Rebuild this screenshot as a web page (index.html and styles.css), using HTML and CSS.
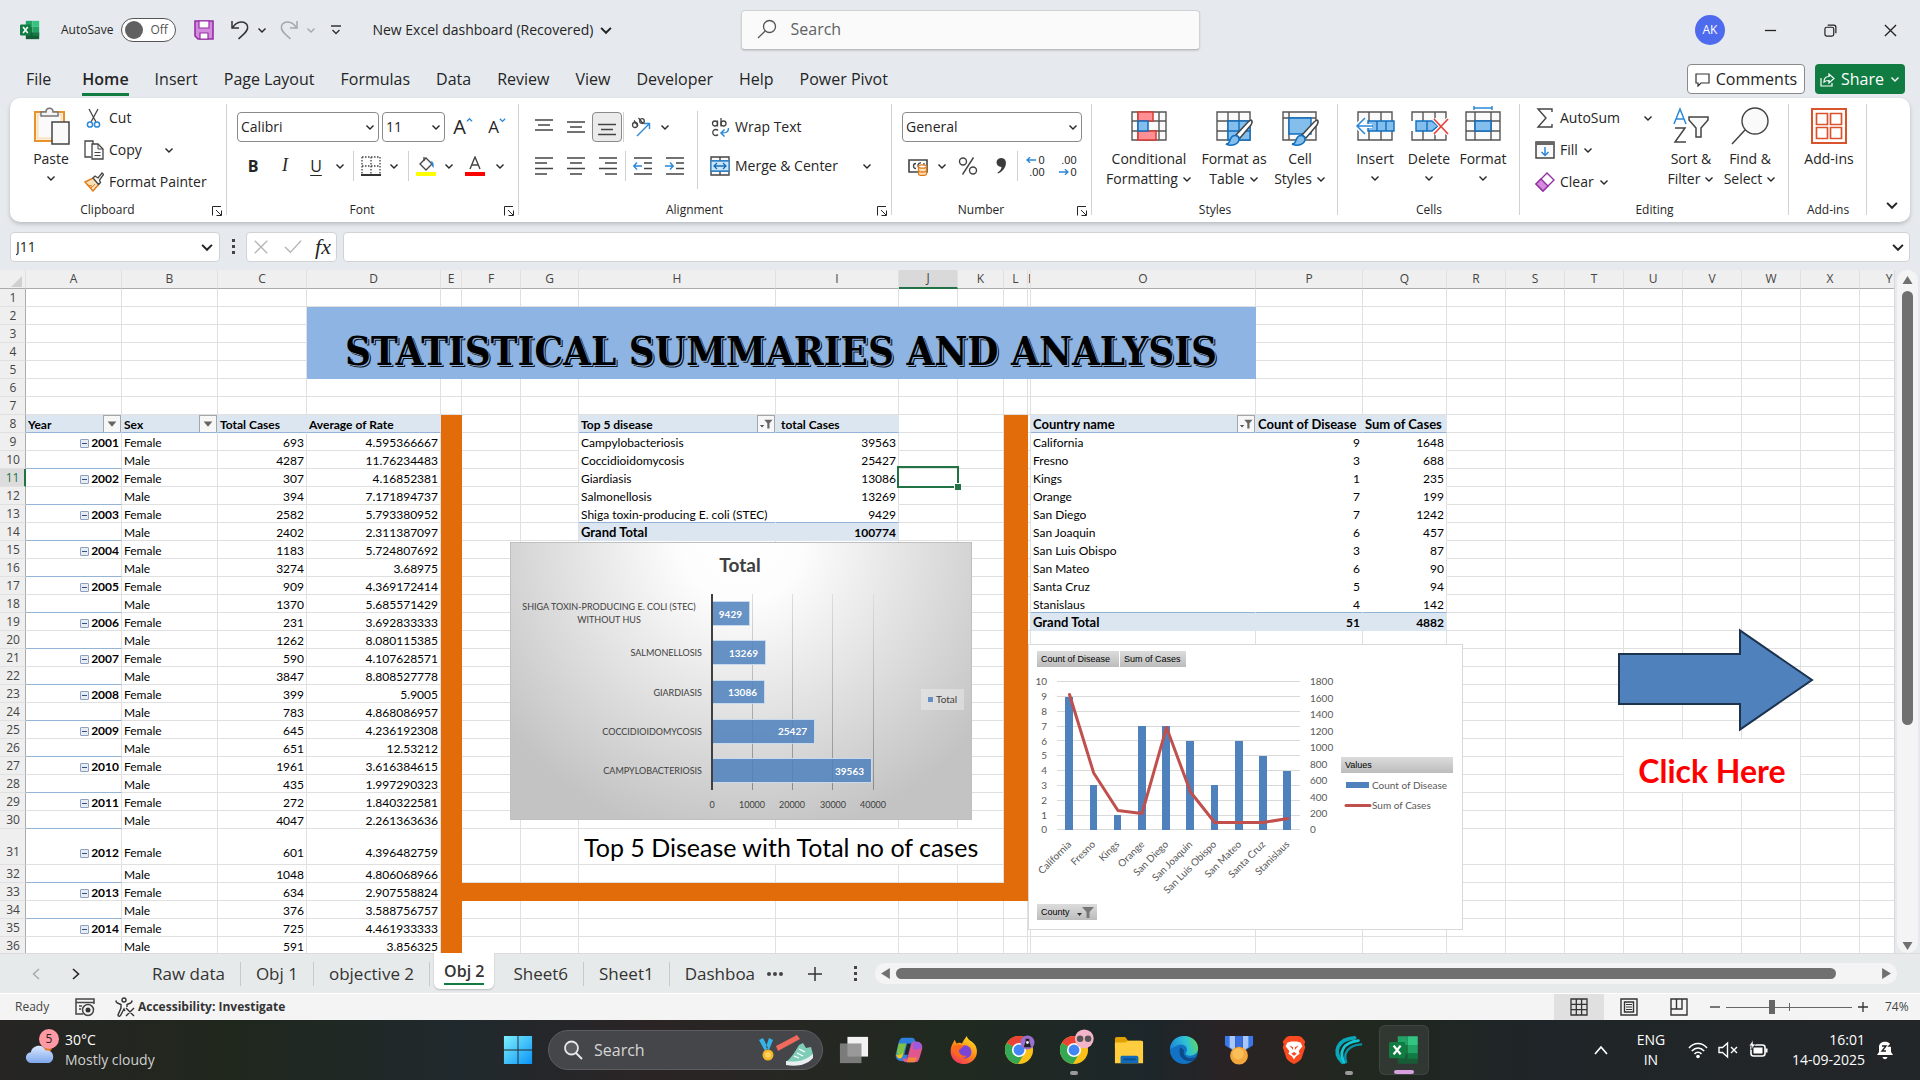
FILE: index.html
```html
<!DOCTYPE html>
<html lang="en">
<head>
<meta charset="utf-8">
<title>New Excel dashboard (Recovered) - Excel</title>
<link rel="stylesheet" href="styles.css">
</head>
<body>
<svg class="defs" aria-hidden="true">
  <symbol id="chev" viewBox="0 0 10 10"><path d="M1.5 3.5 5 7l3.5-3.5" fill="none" stroke="currentColor" stroke-width="1.4"/></symbol>
  <symbol id="launch" viewBox="0 0 10 10"><path d="M.5 9.500V.5H9M4 4l5 5M9.500 4.500v5h-5" fill="none" stroke="currentColor"/></symbol>
  <symbol id="excel" viewBox="0 0 24 24">
    <path d="M7 1h8v7H7z" fill="#21a366"/><path d="M15 1h8v7h-8z" fill="#33c481"/><path d="M7 8h8v8H7z" fill="#107c41"/><path d="M15 8h8v7h-8z" fill="#21a366"/><path d="M7 15h16v8H7z" fill="#185c37"/><path d="M15 15h8v4h-8z" fill="#107c41"/>
    <rect x="0" y="5.500" width="13" height="13" rx="1.200" fill="#107c41"/><path d="M3.700 8.500 9.300 15.500M9.300 8.500 3.700 15.500" stroke="#fff" stroke-width="1.900"/>
  </symbol>
  <symbol id="funnel" viewBox="0 0 16 16"><path d="M6 3h9.500l-3.500 4v6H9.500V7z" fill="#666"/><path d="M1 9h5L3.500 12z" fill="#555"/></symbol>
  <symbol id="chrome" viewBox="0 0 32 32">
    <circle cx="16" cy="16" r="15" fill="#fbc116"/><path d="M16 16 3 8.500A15 15 0 0 1 29 8.500H16z" fill="#ea4335"/><path d="M3 8.500A15 15 0 0 0 15 31l7-12-6-3z" fill="#34a853"/><circle cx="16" cy="16" r="7.500" fill="#fff"/><circle cx="16" cy="16" r="5.800" fill="#4285f4"/>
  </symbol>
</svg>

<header class="titlebar">
  <div class="title-left">
    <svg class="i20 app-icon" viewBox="0 0 24 24"><use href="#excel"/></svg>
    <label class="autosave">AutoSave <input type="checkbox" class="switch"><span class="track"><i></i>Off</span></label>
    <button class="bare save" aria-label="Save"><svg class="i20" viewBox="0 0 20 20"><path d="M1 1h18v18H4l-3-3z" fill="#d48bdd" stroke="#962fa6" stroke-width="1.600"/><path d="M5 1h10v7H5zM6 13h8v6H6z" fill="#fff" stroke="#962fa6" stroke-width="1.200"/></svg></button>
    <button class="bare" aria-label="Undo"><svg class="i20" viewBox="0 0 20 20"><path d="M2 1v7h7M2.500 8C7-.5 16 1 17.500 6c1.500 5-5 9-9 13" fill="none" stroke="#333" stroke-width="1.500"/></svg></button>
    <button class="bare drop" aria-label="Undo list"><svg class="chev"><use href="#chev"/></svg></button>
    <button class="bare dim" aria-label="Redo"><svg class="i20" viewBox="0 0 20 20"><path d="M18 1v7h-7M17.500 8C13-.5 4 1 2.500 6c-1.500 5 5 9 9 13" fill="none" stroke="#a5a9ac" stroke-width="1.500"/></svg></button>
    <button class="bare drop dim" aria-label="Redo list"><svg class="chev"><use href="#chev"/></svg></button>
    <button class="bare custom" aria-label="Customize toolbar"><svg class="chev" viewBox="0 0 10 10"><path d="M0 1h10M1.500 5 5 8.500 8.500 5" fill="none" stroke="#333" stroke-width="1.400"/></svg></button>
    <button class="bare doc">New Excel dashboard (Recovered) <svg class="chev big"><use href="#chev"/></svg></button>
  </div>
  <label class="search"><svg class="i20" viewBox="0 0 20 20"><circle cx="12.500" cy="7.500" r="6" fill="none" stroke="#555" stroke-width="1.300"/><path d="M8.200 12 1 19" stroke="#555" stroke-width="1.300"/></svg><input type="text" placeholder="Search" aria-label="Search"></label>
  <div class="title-right">
    <span class="avatar">AK</span>
    <button class="win" aria-label="Minimize"><svg viewBox="0 0 14 14"><path d="M1 7h12" stroke="#222" stroke-width="1.400"/></svg></button>
    <button class="win" aria-label="Restore"><svg viewBox="0 0 14 14"><rect x="1" y="3.500" width="9.500" height="9.500" rx="2" fill="none" stroke="#222" stroke-width="1.300"/><path d="M4 1.200h6.500a2.300 2.300 0 0 1 2.300 2.300V10" fill="none" stroke="#222" stroke-width="1.300"/></svg></button>
    <button class="win" aria-label="Close"><svg viewBox="0 0 14 14"><path d="m1 1 12 12M13 1 1 13" stroke="#222" stroke-width="1.400"/></svg></button>
  </div>
</header>

<nav class="tabs">
  <button>File</button><button class="on">Home</button><button>Insert</button><button>Page Layout</button><button>Formulas</button><button>Data</button><button>Review</button><button>View</button><button>Developer</button><button>Help</button><button>Power Pivot</button>
  <button class="comments"><svg viewBox="0 0 15 15"><path d="M1 2h13v9H6l-3 3v-3H1z" fill="none" stroke="#333" stroke-width="1.200"/></svg>Comments</button>
  <button class="share"><svg viewBox="0 0 15 15"><path d="M1 6v8h11v-3M4 10c0-4 2-5.500 5-5.500V2l5 4.500L9 11V8.500c-3 0-4 .5-5 1.500z" fill="none" stroke="#fff" stroke-width="1.200"/></svg>Share<svg class="chev"><use href="#chev"/></svg></button>
</nav>

<section class="ribbon">
  <div class="group clip">
    <div class="body">
      <button class="large paste"><svg class="i38" viewBox="0 0 38 38"><path d="M3 5h29v29H3z" fill="#fff" stroke="#e8912d" stroke-width="2"/><path d="M5.500 7.500h24v24h-24z" fill="#fafafa" stroke="#fbe0b8" stroke-width="2"/><path d="M9 9V5h5c0-5 7-5 7 0h5v4z" fill="#f5f5f5" stroke="#767676" stroke-width="1.500"/><path d="M20 15h17v22H20z" fill="#fafafa" stroke="#444" stroke-width="1.500"/></svg>Paste<svg class="chev"><use href="#chev"/></svg></button>
      <div class="stack">
        <button class="cmd"><svg class="i20" viewBox="0 0 20 20"><path d="M5 1l7 13M14 1 7 14" stroke="#444" stroke-width="1.300"/><circle cx="6" cy="16.500" r="2.600" fill="none" stroke="#2b88d8" stroke-width="1.500"/><circle cx="13" cy="16.500" r="2.600" fill="none" stroke="#2b88d8" stroke-width="1.500"/></svg>Cut</button>
        <button class="cmd"><svg class="i20" viewBox="0 0 20 20"><path d="M7 17H1V1h8v3" fill="none" stroke="#444" stroke-width="1.300"/><path d="M8 4h6l5 5v10H8z" fill="#fafafa" stroke="#444" stroke-width="1.300"/><path d="M14 4v5h5M10.500 12.500h6M10.500 15.500h6" fill="none" stroke="#444"/></svg>Copy<svg class="chev far"><use href="#chev"/></svg></button>
        <button class="cmd"><svg class="i20" viewBox="0 0 20 20"><path d="m1 10 8-4 6 6-6 7z" fill="#fbe0b8" stroke="#e07b1a" stroke-width="1.400"/><path d="m3 13 5 1M7 16l4-4" stroke="#e07b1a"/><path d="m9 6 2-2 3 2 4-5 1.500 1.500L15.500 8l1 2.500-2 2z" fill="#fafafa" stroke="#444" stroke-width="1.300"/></svg>Format Painter</button>
      </div>
    </div>
    <div class="foot"><span>Clipboard</span><button class="launcher" aria-label="Clipboard options"><svg><use href="#launch"/></svg></button></div>
  </div>

  <div class="group font">
    <div class="body rows">
      <div class="row">
        <span class="combo w142"><select aria-label="Font"><option>Calibri</option></select><svg class="chev"><use href="#chev"/></svg></span>
        <span class="combo w63"><select aria-label="Font size"><option>11</option></select><svg class="chev"><use href="#chev"/></svg></span>
        <button class="ic w36" aria-label="Grow font"><span class="ga">A</span><svg class="caret" viewBox="0 0 8 8"><path d="m1 5 3-3 3 3" fill="none" stroke="#2b88d8" stroke-width="1.500"/></svg></button>
        <button class="ic w32" aria-label="Shrink font"><span class="gs">A</span><svg class="caret" viewBox="0 0 8 8"><path d="m1 2 3 3 3-3" fill="none" stroke="#2b88d8" stroke-width="1.500"/></svg></button>
      </div>
      <div class="row">
        <button class="ic w32 bold">B</button><button class="ic w32 ital">I</button><button class="ic w30 under">U</button><button class="ic w18" aria-label="Underline styles"><svg class="chev"><use href="#chev"/></svg></button>
        <i class="sep"></i>
        <button class="ic w26" aria-label="Borders"><svg class="i20" viewBox="0 0 20 20"><path d="M1 1h18v17M1 1v17M10 1v17M1 10h18" fill="none" stroke="#444" stroke-width="1.300" stroke-dasharray="1.500 1.500"/><path d="M0 19h20" stroke="#333" stroke-width="2"/></svg></button><button class="ic w20" aria-label="Border styles"><svg class="chev"><use href="#chev"/></svg></button>
        <i class="sep"></i>
        <button class="ic w26" aria-label="Fill color"><svg class="i20" viewBox="0 0 20 20"><path d="m4 8 6-6 6 6-6 6z" fill="#fafafa" stroke="#444" stroke-width="1.300"/><path d="M8 5V1" stroke="#444" stroke-width="1.300"/><path d="M15 5c3 1 3 4 2.500 7-2-2-2-4-2.500-7z" fill="#2b88d8"/><path d="M0 16h20v4H0z" fill="#ff0"/></svg></button><button class="ic w20" aria-label="Fill color list"><svg class="chev"><use href="#chev"/></svg></button>
        <button class="ic w32" aria-label="Font color"><svg class="i20" viewBox="0 0 20 20"><path d="m5 13 5-12 5 12M6.700 9h6.600" fill="none" stroke="#444" stroke-width="1.400"/><path d="M0 16h20v4H0z" fill="red"/></svg></button><button class="ic w18" aria-label="Font color list"><svg class="chev"><use href="#chev"/></svg></button>
      </div>
    </div>
    <div class="foot"><span>Font</span><button class="launcher" aria-label="Font options"><svg><use href="#launch"/></svg></button></div>
  </div>

  <div class="group align">
    <div class="body">
      <div class="rows">
        <div class="row">
          <button class="ic w32" aria-label="Top align"><svg class="i20" viewBox="0 0 20 20"><path d="M1 3h18M4 8h12M1 13h18" stroke="#444" stroke-width="1.400"/></svg></button>
          <button class="ic w32" aria-label="Middle align"><svg class="i20" viewBox="0 0 20 20"><path d="M1 5h18M4 10h12M1 15h18" stroke="#444" stroke-width="1.400"/></svg></button>
          <button class="ic w30 pressed" aria-label="Bottom align"><svg class="i20" viewBox="0 0 20 20"><path d="M1 7.500h18M4 12.500h12M1 17.500h18" stroke="#444" stroke-width="1.400"/></svg></button>
          <i class="sep tight"></i>
          <button class="ic w32" aria-label="Orientation"><svg class="i20" viewBox="0 0 20 20"><path d="M6 19 18 7M13 6.500h5.500V12" fill="none" stroke="#2b88d8" stroke-width="1.400"/><circle cx="4" cy="8" r="2.500" fill="none" stroke="#444" stroke-width="1.300"/><path d="M3 3.500 7 9M7.500 1l5 6" stroke="#444" stroke-width="1.300"/><circle cx="11" cy="4" r="2.300" fill="none" stroke="#444" stroke-width="1.300"/></svg></button><button class="ic w16" aria-label="Orientation list"><svg class="chev"><use href="#chev"/></svg></button>
        </div>
        <div class="row">
          <button class="ic w32" aria-label="Align left"><svg class="i20" viewBox="0 0 20 20"><path d="M1 2h18M1 7h12M1 12.500h18M1 18h12" stroke="#444" stroke-width="1.400"/></svg></button>
          <button class="ic w32" aria-label="Center"><svg class="i20" viewBox="0 0 20 20"><path d="M1 2h18M4 7h12M1 12.500h18M4 18h12" stroke="#444" stroke-width="1.400"/></svg></button>
          <button class="ic w32" aria-label="Align right"><svg class="i20" viewBox="0 0 20 20"><path d="M1 2h18M7 7h12M1 12.500h18M7 18h12" stroke="#444" stroke-width="1.400"/></svg></button>
          <i class="sep tight"></i>
          <button class="ic w32" aria-label="Decrease indent"><svg class="i20" viewBox="0 0 20 20"><path d="M1 2h18M11 7h8M11 12.500h8M1 18h18" stroke="#444" stroke-width="1.400"/><path d="M9 10H1M4 6.500.8 10 4 13.500" fill="none" stroke="#2b88d8" stroke-width="1.400"/></svg></button>
          <button class="ic w32" aria-label="Increase indent"><svg class="i20" viewBox="0 0 20 20"><path d="M1 2h18M11 7h8M11 12.500h8M1 18h18" stroke="#444" stroke-width="1.400"/><path d="M0 10h8M5 6.500 8.200 10 5 13.500" fill="none" stroke="#2b88d8" stroke-width="1.400"/></svg></button>
        </div>
      </div>
      <i class="sep tall"></i>
      <div class="rows wrap">
        <div class="row"><button class="cmd"><svg class="i20" viewBox="0 0 20 20"><g fill="none" stroke="#444" stroke-width="1.300"><circle cx="5" cy="6.500" r="2.500"/><path d="M7.500 3.500v6M11 1v8.500"/><circle cx="13.500" cy="6.500" r="2.500"/><path d="M8 13.500a3 3 0 1 0 0 4"/></g><path d="M18.500 11c0 4-2 5-7 5M14.500 12.500 11 16l3.500 3.500" fill="none" stroke="#2b88d8" stroke-width="1.500"/></svg>Wrap Text</button></div>
        <div class="row"><button class="cmd"><svg class="i20" viewBox="0 0 20 20"><path d="M1 1h18v18H1zM1 5h18M1 15h18M10 1v4M10 15v4" fill="#fafafa" stroke="#444" stroke-width="1.400"/><path d="M1 5h18v10H1z" fill="#cfe5f7" stroke="#2b88d8" stroke-width="1.300"/><path d="M4 10h12M7 7l-3 3 3 3M13 7l3 3-3 3" fill="none" stroke="#106ebe" stroke-width="1.300"/></svg>Merge &amp; Center<svg class="chev far"><use href="#chev"/></svg></button></div>
      </div>
    </div>
    <div class="foot"><span>Alignment</span><button class="launcher" aria-label="Alignment options"><svg><use href="#launch"/></svg></button></div>
  </div>

  <div class="group number">
    <div class="body rows">
      <div class="row"><span class="combo w180"><select aria-label="Number format"><option>General</option></select><svg class="chev"><use href="#chev"/></svg></span></div>
      <div class="row">
        <button class="ic w32" aria-label="Accounting format"><svg class="i20" viewBox="0 0 20 20"><path d="M1 4h18v12H1z" fill="#fff" stroke="#444" stroke-width="1.600"/><path d="M8 7.500a2.500 2.500 0 1 0 0 5M13 7a2.500 2.500 0 1 0-1 5M16 7v2" fill="none" stroke="#444" stroke-width="1.300"/><path d="M10.500 10.500v7.500c0 2 8 2 8 0v-7.500" fill="#fbe0b8" stroke="#e07b1a" stroke-width="1.300"/><ellipse cx="14.500" cy="10.500" rx="4" ry="1.700" fill="#fff" stroke="#e07b1a" stroke-width="1.300"/><path d="M10.500 14.500c0 2 8 2 8 0" fill="none" stroke="#e07b1a" stroke-width="1.300"/></svg></button><button class="ic w16" aria-label="Currency list"><svg class="chev"><use href="#chev"/></svg></button>
        <button class="ic w36" aria-label="Percent"><svg class="i20" viewBox="0 0 20 20"><g fill="none" stroke="#444" stroke-width="1.400"><circle cx="5" cy="5.500" r="3.500"/><circle cx="15" cy="14.500" r="3.500"/><path d="M15.500 1.500 4.500 18.500"/></g></svg></button>
        <button class="ic w30" aria-label="Comma style"><svg class="i20" viewBox="0 0 20 20"><path d="M10 2c5 0 6 5 4 9-1.500 3-4 5.500-7 6.500l-.5-1c2-1 4-3 4-5.500C4 11 4 2 10 2z" fill="#3b3b3b"/></svg></button>
        <i class="sep tight"></i>
        <button class="ic w32 dec" aria-label="Increase decimal"><svg viewBox="0 0 12 8"><path d="M11 4H1M4.500 1 1 4l3.500 3" fill="none" stroke="#2b88d8" stroke-width="1.500"/></svg><span>0</span><span class="full">.00</span></button>
        <button class="ic w32 dec" aria-label="Decrease decimal"><span class="full">.00</span><svg viewBox="0 0 12 8"><path d="M1 4h10M7.500 1 11 4 7.500 7" fill="none" stroke="#2b88d8" stroke-width="1.500"/></svg><span>0</span></button>
      </div>
    </div>
    <div class="foot"><span>Number</span><button class="launcher" aria-label="Number options"><svg><use href="#launch"/></svg></button></div>
  </div>

  <div class="group styles">
    <div class="body">
      <button class="large w98"><svg class="i38" viewBox="0 0 38 38"><path d="M2 5h34v28H2zM2 14h34M2 24h34M8 5v28M29 5v28" fill="#fafafa" stroke="#555" stroke-width="1.400"/><path d="M8 5h15v9H8zM8 24h18v9H8z" fill="#ff8f94" stroke="#d83b32" stroke-width="1.500"/><path d="M8 14h10v10H8z" fill="#83beec" stroke="#106ebe" stroke-width="1.500"/></svg>Conditional<span>Formatting <svg class="chev"><use href="#chev"/></svg></span></button>
      <button class="large w72"><svg class="i38" viewBox="0 0 38 38"><path d="M2 5h33v28H2zM2 14h33M2 24h33M13 5v28M24 5v28" fill="#fafafa" stroke="#555" stroke-width="1.400"/><path d="M13 14h22v19H13zM13 24h22M24 14v19" fill="#83beec" stroke="#106ebe" stroke-width="1.400"/><path d="M36 13c2 1 1 3 0 5L25 31l-4-3 12-13z" fill="#fff" stroke="#444" stroke-width="1.500"/><path d="M11 37c4 0 3-3 5-6 2-4 8-3 8 1 0 5-7 8-13 5z" fill="#83beec" stroke="#106ebe" stroke-width="1.500"/></svg>Format as<span>Table <svg class="chev"><use href="#chev"/></svg></span></button>
      <button class="large w60"><svg class="i38" viewBox="0 0 38 38"><path d="M2 5h33v28H2zM2 11h33M8 5v28" fill="#fafafa" stroke="#555" stroke-width="1.400"/><path d="M8 11h22v16H8z" fill="#83beec" stroke="#106ebe" stroke-width="1.400"/><path d="M36 13c2 1 1 3 0 5L25 31l-4-3 12-13z" fill="#fff" stroke="#444" stroke-width="1.500"/><path d="M11 37c4 0 3-3 5-6 2-4 8-3 8 1 0 5-7 8-13 5z" fill="#83beec" stroke="#106ebe" stroke-width="1.500"/></svg>Cell<span>Styles <svg class="chev"><use href="#chev"/></svg></span></button>
    </div>
    <div class="foot"><span>Styles</span></div>
  </div>

  <div class="group cells">
    <div class="body">
      <button class="large w54"><svg class="i38" viewBox="0 0 38 38"><path d="M2 5h34v28H2zM13 5v28M25 5v28" fill="#fafafa" stroke="#555" stroke-width="1.400"/><path d="M12 14h26v10H12zM21 14v10M30 14v10" fill="#83beec" stroke="#106ebe" stroke-width="1.400"/><path d="M16 19H1M9 10l-8.500 9L9 28" fill="none" stroke="#fff" stroke-width="4"/><path d="M17 19H1M9 11l-8 8 8 8" fill="none" stroke="#2b88d8" stroke-width="1.600"/></svg>Insert<svg class="chev"><use href="#chev"/></svg></button>
      <button class="large w54"><svg class="i38" viewBox="0 0 38 38"><path d="M2 14V5h34v9M2 24v9h34v-9M13 5v9M25 5v9M13 24v9M25 24v9" fill="#fafafa" stroke="#555" stroke-width="1.400"/><path d="M6 14h16l6 5-6 5H6zM17 14v10" fill="#83beec" stroke="#106ebe" stroke-width="1.400"/><path d="m24 12 14 15M38 12 24 27" stroke="#fff" stroke-width="4"/><path d="m24 12 14 15M38 12 24 27" stroke="#e8413b" stroke-width="1.700"/></svg>Delete<svg class="chev"><use href="#chev"/></svg></button>
      <button class="large w54"><svg class="i38" viewBox="0 0 38 38"><path d="M2 5h34v28H2zM2 14h34M2 24h34M11 5v28M27 5v28" fill="#fafafa" stroke="#555" stroke-width="1.400"/><path d="M11 14h16v10H11z" fill="#83beec" stroke="#106ebe" stroke-width="1.500"/><path d="M10 1h18M10-1v4M28-1v4" stroke="#2b88d8" stroke-width="1.500"/></svg>Format<svg class="chev"><use href="#chev"/></svg></button>
    </div>
    <div class="foot"><span>Cells</span></div>
  </div>

  <div class="group editing">
    <div class="body">
      <div class="stack">
        <button class="cmd"><svg class="i20" viewBox="0 0 20 20"><path d="M17 4V1H3l8 9-8 9h14v-3" fill="none" stroke="#444" stroke-width="1.400"/></svg>AutoSum<svg class="chev far"><use href="#chev"/></svg></button>
        <button class="cmd"><svg class="i20" viewBox="0 0 20 20"><path d="M1 2h18v16H1z" fill="#fafafa" stroke="#444" stroke-width="1.500"/><path d="M1 3.500h18" stroke="#666" stroke-width="3"/><path d="M10 7v8M6.500 12l3.500 3.500 3.500-3.500" fill="none" stroke="#2b88d8" stroke-width="1.500"/></svg>Fill <svg class="chev"><use href="#chev"/></svg></button>
        <button class="cmd"><svg class="i20" viewBox="0 0 20 20"><path d="M12 1 19 8 8 19 1 12z" fill="#fff" stroke="#962fa6" stroke-width="1.400"/><path d="M6 7 13 14 8 19 1 12z" fill="#d48bdd" stroke="#962fa6" stroke-width="1.400"/></svg>Clear <svg class="chev"><use href="#chev"/></svg></button>
      </div>
      <button class="large w60"><svg class="i38" viewBox="0 0 38 38"><path d="M2 17 8 2l6 15M4 12h8" fill="none" stroke="#2b88d8" stroke-width="1.500"/><path d="M3 21h10L3 35h11" fill="none" stroke="#444" stroke-width="1.500"/><path d="M17 10h19v3l-7 8v9h-5v-9l-7-8z" fill="#fafafa" stroke="#444" stroke-width="1.500"/></svg>Sort &amp;<span>Filter <svg class="chev"><use href="#chev"/></svg></span></button>
      <button class="large w58"><svg class="i38" viewBox="0 0 38 38"><circle cx="24" cy="14" r="13" fill="#fafafa" stroke="#444" stroke-width="1.400"/><path d="M14 23 1 37" stroke="#444" stroke-width="1.500"/></svg>Find &amp;<span>Select <svg class="chev"><use href="#chev"/></svg></span></button>
    </div>
    <div class="foot"><span>Editing</span></div>
  </div>

  <div class="group addins">
    <div class="body"><button class="large w72"><svg class="i38" viewBox="0 0 38 38"><path d="M2 2h34v34H2z" fill="#fff" stroke="#d9532c" stroke-width="2"/><path d="M6.500 6.500h11v11h-11zM20.500 6.500h11v11h-11zM6.500 20.500h11v11h-11zM20.500 20.500h11v11h-11z" fill="#fff" stroke="#d9532c" stroke-width="1.700"/></svg>Add-ins</button></div>
    <div class="foot"><span>Add-ins</span></div>
  </div>
  <button class="bare collapse" aria-label="Ribbon options"><svg class="chev big"><use href="#chev"/></svg></button>
</section>

<section class="formula">
  <label class="namebox"><input type="text" value="J11" aria-label="Name box"><svg class="chev big"><use href="#chev"/></svg></label>
  <i class="dots"></i>
  <div class="fxbox">
    <button class="bare" aria-label="Cancel"><svg viewBox="0 0 18 18"><path d="m2 2 14 14M16 2 2 16" stroke="#b4b4b4" stroke-width="1.500"/></svg></button>
    <button class="bare" aria-label="Enter"><svg viewBox="0 0 20 18"><path d="m1 9 6 6L19 2" fill="none" stroke="#b4b4b4" stroke-width="1.500"/></svg></button>
    <button class="bare fx">fx</button>
  </div>
  <label class="fxinput"><input type="text" aria-label="Formula"><svg class="chev big"><use href="#chev"/></svg></label>
</section>

<main class="sheet">
  <div class="canvas">
    <table class="grid" id="grid"></table>

    <svg class="bar-chart" viewBox="0 0 462 278" role="img" aria-label="Total by disease">
      <defs>
        <radialGradient id="bg" gradientUnits="userSpaceOnUse" cx="231" cy="0" r="300"><stop offset="0" stop-color="#fff"/><stop offset=".2" stop-color="#fdfdfd"/><stop offset="1" stop-color="#c3c3c3"/></radialGradient>
        <linearGradient id="gl" gradientUnits="userSpaceOnUse" x1="0" y1="52" x2="0" y2="248"><stop offset="0" stop-color="#dedede"/><stop offset="1" stop-color="#8a8a8a"/></linearGradient>
      </defs>
      <rect x=".5" y=".5" width="461" height="277" fill="url(#bg)" stroke="#bfbfbf"/>
      <text class="c-title" x="230" y="30">Total</text>
      <g fill="url(#gl)"><rect x="242" y="52" width="1" height="196"/><rect x="282" y="52" width="1" height="196"/><rect x="322" y="52" width="1" height="196"/><rect x="363" y="52" width="1" height="196"/></g>
      <g fill="#4f81bd" fill-opacity=".86" stroke="#c9d9ec"><path d="M202.500 59.500h37v24h-37z"/><path d="M202.500 98.500h53v24h-53z"/><path d="M202.500 138.500h52v23h-52z"/><path d="M202.500 177.500h102v24h-102z"/><path d="M202.500 216.500h159v24h-159z"/></g>
      <path d="M202 52v196" stroke="#404040" stroke-width="2"/>
      <g class="c-val"><text x="232" y="76">9429</text><text x="248" y="115">13269</text><text x="247" y="154">13086</text><text x="297" y="193">25427</text><text x="354" y="233">39563</text></g>
      <g class="c-cat"><text class="mid" x="99" y="68">SHIGA TOXIN-PRODUCING E. COLI (STEC)</text><text class="mid" x="99" y="81">WITHOUT HUS</text><text x="192" y="114">SALMONELLOSIS</text><text x="192" y="154">GIARDIASIS</text><text x="192" y="193">COCCIDIOIDOMYCOSIS</text><text x="192" y="232">CAMPYLOBACTERIOSIS</text></g>
      <g class="c-cat mid"><text x="202" y="266">0</text><text x="242" y="266">10000</text><text x="282" y="266">20000</text><text x="323" y="266">30000</text><text x="363" y="266">40000</text></g>
      <rect x="411" y="147" width="43" height="21" fill="#f2f2f2" fill-opacity=".4"/><rect x="418" y="155" width="5" height="5" fill="#6590c6"/>
      <text class="c-cat left" x="426" y="161">Total</text>
    </svg>

    <svg class="combo-chart" viewBox="0 0 435 286" role="img" aria-label="Count of Disease and Sum of Cases by county">
      <defs><linearGradient id="btn" x1="0" y1="0" x2="0" y2="1"><stop offset="0" stop-color="#dcdcdc"/><stop offset="1" stop-color="#bcbcbc"/></linearGradient></defs>
      <rect x=".5" y=".5" width="434" height="285" fill="#fff" stroke="#d9d9d9"/>
      <g fill="url(#btn)"><rect x="9" y="7" width="82" height="16"/><rect x="92" y="7" width="66" height="16"/><rect x="313" y="113" width="112" height="16"/><rect x="9" y="260" width="60" height="16"/></g>
      <g class="c-btn"><text x="13" y="18">Count of Disease</text><text x="96" y="18">Sum of Cases</text><text x="317" y="124">Values</text><text x="13" y="271">County</text></g>
      <path d="M49 269h5l-2.500 3z" fill="#333"/><path d="M54 263h12l-4.500 5v6h-3v-6z" fill="#777"/>
      <path d="M29 37.500h243M29 52.500h243M29 67.500h243M29 82.500h243M29 96.500h243M29 111.500h243M29 126.500h243M29 141.500h243M29 156.500h243M29 171.500h243M29 185.500h243" stroke="#d9d9d9"/>
      <path d="M37 186V53h8v133zM62 186v-45h7v45zM86 186v-15h7v15zM110 186V82h8v104zM134 186V82h8v104zM158 186V97h8v89zM183 186v-45h7v45zM207 186V97h8v89zM231 186v-74h8v74zM255 186v-59h8v59z" fill="#4f81bd"/>
      <path d="M41.500 50.500 65.700 129 89.900 166.500 114 169.500 138.500 83.500 162.500 148 186.700 178.500 235 178.500 260 174.500" fill="none" stroke="#c0504d" stroke-width="3" stroke-linejoin="round" stroke-linecap="round"/>
      <g class="c-ax end"><text x="19" y="41">10</text><text x="19" y="56">9</text><text x="19" y="71">8</text><text x="19" y="86">7</text><text x="19" y="101">6</text><text x="19" y="115">5</text><text x="19" y="130">4</text><text x="19" y="145">3</text><text x="19" y="160">2</text><text x="19" y="175">1</text><text x="19" y="189">0</text></g>
      <g class="c-ax"><text x="282" y="41">1800</text><text x="282" y="58">1600</text><text x="282" y="74">1400</text><text x="282" y="91">1200</text><text x="282" y="107">1000</text><text x="282" y="124">800</text><text x="282" y="140">600</text><text x="282" y="157">400</text><text x="282" y="173">200</text><text x="282" y="189">0</text></g>
      <g class="c-ax end"><text transform="translate(44 201) rotate(-45)">California</text><text transform="translate(68 201) rotate(-45)">Fresno</text><text transform="translate(92 201) rotate(-45)">Kings</text><text transform="translate(117 201) rotate(-45)">Orange</text><text transform="translate(141 201) rotate(-45)">San Diego</text><text transform="translate(165 201) rotate(-45)">San Joaquin</text><text transform="translate(189 201) rotate(-45)">San Luis Obispo</text><text transform="translate(214 201) rotate(-45)">San Mateo</text><text transform="translate(238 201) rotate(-45)">Santa Cruz</text><text transform="translate(262 201) rotate(-45)">Stanislaus</text></g>
      <rect x="318" y="138" width="23" height="6" fill="#4f81bd"/><path d="M318 161.500h24" stroke="#c0504d" stroke-width="3" stroke-linecap="round"/>
      <g class="c-ax"><text x="344" y="145">Count of Disease</text><text x="344" y="165">Sum of Cases</text></g>
    </svg>

    <a class="arrow" href="#next" aria-label="Next sheet"><svg viewBox="0 0 197 104"><path d="M2 26h121V2.500L195 52l-72 49.500V76H2z" fill="#4f81bd" stroke="#1c334e" stroke-width="2"/></svg></a>
  </div>
  <div class="vscroll"><svg viewBox="0 0 10 8"><path d="M5 0 10 8H0z"/></svg><i></i><svg viewBox="0 0 10 8"><path d="M0 0h10L5 8z"/></svg></div>
</main>

<nav class="sheets">
  <div class="nav"><button class="bare dim" aria-label="Previous sheet"><svg viewBox="0 0 8 12"><path d="M7 1 1.500 6 7 11" fill="none" stroke="currentColor" stroke-width="1.400"/></svg></button><button class="bare" aria-label="Next sheet"><svg viewBox="0 0 8 12"><path d="m1 1 5.500 5L1 11" fill="none" stroke="currentColor" stroke-width="1.600"/></svg></button></div>
  <button class="tab">Raw data</button><button class="tab">Obj 1</button><button class="tab">objective 2</button><button class="tab on"><span>Obj 2</span></button><button class="tab">Sheet6</button><button class="tab">Sheet1</button><button class="tab last">Dashboa</button>
  <button class="bare more" aria-label="More sheets"><i></i><i></i><i></i></button>
  <button class="bare add" aria-label="New sheet"><svg viewBox="0 0 14 14"><path d="M7 0v14M0 7h14" stroke="#333" stroke-width="1.500"/></svg></button>
  <i class="dots"></i>
  <div class="hscroll"><svg viewBox="0 0 8 10"><path d="M8 0v10L0 5z"/></svg><i></i><svg viewBox="0 0 8 10"><path d="M0 0v10l8-5z"/></svg></div>
</nav>

<footer class="status">
  <span class="ready">Ready</span>
  <svg class="i20 macro" viewBox="0 0 20 20"><path d="M8 17H1V2h18v5M1 5.500h18" fill="none" stroke="#444" stroke-width="1.500"/><path d="M4 9h3M4 12h2" stroke="#444" stroke-width="1.500"/><circle cx="13" cy="13" r="5.500" fill="none" stroke="#444" stroke-width="1.500"/><circle cx="13" cy="13" r="2.500" fill="#333"/></svg>
  <button class="bare access"><svg class="i20" viewBox="0 0 20 20"><g fill="none" stroke="#333" stroke-width="1.400"><circle cx="9" cy="3" r="2"/><path d="M1.500 3.500c-1 1 0 2 1 2.500L6 7.500V11L3 18c0 1.500 2 1.500 2.500.5L9 12l1 2M16.500 3.500c1 1 0 2-1 2.500L12 7.500V10M11 11l8 8M19 11l-8 8"/></g></svg>Accessibility: Investigate</button>
  <div class="views">
    <button class="on" aria-label="Normal"><svg viewBox="0 0 18 18"><path d="M1 1h16v16H1zM1 6.300h16M1 11.600h16M6.300 1v16M11.600 1v16" fill="none" stroke="#333" stroke-width="1.300"/></svg></button>
    <button aria-label="Page layout"><svg viewBox="0 0 18 18"><path d="M1 1h16v16H1zM4.500 4h9v10h-9z" fill="none" stroke="#333" stroke-width="1.400"/><path d="M6 6.500h6M6 9h6M6 11.500h6" stroke="#333" stroke-width="1.200"/></svg></button>
    <button aria-label="Page break"><svg viewBox="0 0 18 18"><path d="M1 1h16v16H1zM1 11h11V1M6.500 1v10" fill="none" stroke="#333" stroke-width="1.400"/></svg></button>
  </div>
  <div class="zoom"><button class="bare" aria-label="Zoom out"><svg viewBox="0 0 10 10"><path d="M0 5h10" stroke="#333" stroke-width="1.300"/></svg></button><input type="range" min="0" max="100" value="36" aria-label="Zoom"><button class="bare" aria-label="Zoom in"><svg viewBox="0 0 10 10"><path d="M0 5h10M5 0v10" stroke="#333" stroke-width="1.300"/></svg></button></div>
  <span class="pct">74%</span>
</footer>

<footer class="taskbar">
  <div class="side">
    <button class="weather"><span class="cloud"><svg viewBox="0 0 32 22"><defs><linearGradient id="cl" x1="0" y1="0" x2="0" y2="1"><stop offset="0" stop-color="#dbe8fd"/><stop offset="1" stop-color="#7fa7ec"/></linearGradient></defs><circle cx="25" cy="4" r="4" fill="#f2700f"/><path d="M7 21a6 6 0 0 1-1-12C7 1 20-1 22 7c11-1 11 14 2 14z" fill="url(#cl)"/></svg><b>5</b></span><span class="wt">30°C<em>Mostly cloudy</em></span></button>
  </div>
  <div class="apps">
    <button class="app" aria-label="Start"><svg viewBox="0 0 32 32"><defs><linearGradient id="wn" x1="0" y1="0" x2="1" y2="1"><stop offset="0" stop-color="#7df0fd"/><stop offset="1" stop-color="#0a93f7"/></linearGradient></defs><path d="M1 1h14.500v14.500H1zM16.500 1H31v14.500H16.500zM1 16.500h14.500V31H1zM16.500 16.500H31V31H16.500z" fill="url(#wn)"/></svg></button>
    <label class="tsearch"><svg class="i20" viewBox="0 0 20 20"><circle cx="8.500" cy="8" r="6.500" fill="#5a5c60" stroke="#e8e8e8" stroke-width="1.800"/><path d="m13 13 6 6" stroke="#e8e8e8" stroke-width="2"/></svg><input type="text" placeholder="Search" aria-label="Search Windows"><svg class="promo" viewBox="0 0 56 32"><path d="m1 6 4-2 5 10-3 3zM15 6l-4-2-3 9 3 3z" fill="#35b4e8"/><circle cx="10" cy="21" r="5.500" fill="#f7b52b"/><circle cx="10" cy="21" r="3" fill="#ffd35c"/><path d="M18 12 39 1l3 4-22 12z" fill="#ef6a5c"/><path d="M28 28c5-4 9-10 13-17l4-2 3 5 5-1c1 4 2 6 2 9-6 6-15 8-27 6z" fill="#7fcdb8"/><path d="M28 27c12 2 20-1 27-7v4c-6 7-16 9-27 7z" fill="#e9eef0"/><path d="m41 15 6 3M39 19l6 3M36 22l5 2" stroke="#fff" stroke-width="1.300"/></svg></label>
    <button class="app" aria-label="Task view"><svg viewBox="0 0 32 32"><path d="M9 2h22v21H9z" fill="#f2f2f2"/><path d="M1 9h23v21H1z" fill="#8a8a8a" opacity=".85"/></svg></button>
    <button class="app" aria-label="Copilot"><svg viewBox="0 0 32 32"><path d="M10 3h9c2 0 3 1 4 4l1 4h-6L14 24c-1 3-2 4-5 4-5 0-8-3-7-8L5 8c1-3 2-5 5-5z" fill="#2f7fe0"/><path d="M3 18 5 9h8l-3 11c-1 4-6 4-7-2z" fill="#7fc241"/><path d="M2 20c2 3 7 1 8-2l-1 5c-1 3-6 3-7-3z" fill="#f5c518"/><path d="M22 29h-9c-2 0-3-1-4-4l5 0 4-14c1-3 2-4 5-4 5 0 8 3 7 8l-3 10c-1 3-2 4-5 4z" fill="#e2568f"/><path d="M15 24h10l-1 2c-1 2-2 3-4 3h-6z" fill="#f2863a"/><path d="M20 9c2-2 7-3 9 1l1 4-9 2z" fill="#9a5be0"/><path d="M14 9h4l-3 12h-4z" fill="#22282a"/></svg></button>
    <button class="app" aria-label="Firefox"><svg viewBox="0 0 32 32"><defs><linearGradient id="ff" x1=".8" y1="0" x2=".2" y2="1"><stop offset="0" stop-color="#ffe226"/><stop offset=".5" stop-color="#ff8a16"/><stop offset="1" stop-color="#f0305f"/></linearGradient></defs><path d="M19 1c1 5 6 5 9 10 5 9-1 20-12 20S-1 21 3 11l3-6 2 4c2-1 4-1 6 0 1-3 3-5 5-8z" fill="url(#ff)"/><circle cx="17" cy="18" r="7" fill="#7a45d6"/><path d="M4 13c4-4 8-3 12-1-3 1-3 3-6 4 1 5 5 7 9 6-5 5-13 2-15-9z" fill="#ff6a1a"/></svg></button>
    <button class="app" aria-label="Chrome profile 1"><svg viewBox="0 0 32 32"><use href="#chrome"/><circle cx="25" cy="8" r="7.500" fill="#9b6fd0"/><path d="M23 4h4v3l2 6h-8l2-6z" fill="#222"/><circle cx="25" cy="8" r="1.500" fill="#eee"/></svg></button>
    <button class="app run" aria-label="Chrome profile 2"><svg viewBox="0 0 32 32"><use href="#chrome"/><circle cx="27" cy="4" r="10" fill="#f5b5c8"/><circle cx="22.500" cy="4" r="3.500" fill="#555"/><circle cx="31" cy="4" r="3.500" fill="#555"/></svg></button>
    <button class="app" aria-label="File Explorer"><svg viewBox="0 0 32 32"><path d="M1 4c0-1 1-2 2-2h9l3 4h14v8H1z" fill="#e0a100"/><path d="M1 8h11l3-2h14c2 0 2 1 2 2v22H1z" fill="#ffcd3d"/><path d="M7 30v-6c0-2 1-2 2-2h15c1 0 2 1 2 2v6z" fill="#0f6cbd"/><path d="M10 26h13" stroke="#0a4d8c" stroke-width="2"/></svg></button>
    <button class="app" aria-label="Edge"><svg viewBox="0 0 32 32"><defs><linearGradient id="ed" x1="0" y1=".5" x2="1" y2=".3"><stop offset="0" stop-color="#1e88d8"/><stop offset=".6" stop-color="#2fc3d6"/><stop offset="1" stop-color="#5fd85a"/></linearGradient></defs><circle cx="16" cy="16" r="15" fill="#1273c4"/><path d="M1 15C2 5 9 1 16 1c9 0 15 6 15 13 0 5-4 8-9 8-4 0-5-2-4-3 4-6-3-11-9-8-4 2-7 4-8 4z" fill="url(#ed)"/><path d="M12 13c-3 7 2 16 12 15 3-1 5-3 6-5-8 4-16 1-14-7z" fill="#0c4a8a"/></svg></button>
    <button class="app" aria-label="Rewards"><svg viewBox="0 0 32 32"><path d="M1 1h8v11l7 4 7-4V1h8v10l-11 7h-8L1 11z" fill="#3b78e7"/><path d="M6 1h6v13l4 2 4-2V1h6v12l-6 4h-8l-6-4z" fill="#a8c8fa"/><path d="M12 1h8v12h-8z" fill="#3b6fe0"/><circle cx="16" cy="22" r="9.500" fill="#f4a73b"/><circle cx="15" cy="20" r="6" fill="#f9bf5a"/></svg></button>
    <button class="app" aria-label="Brave"><svg viewBox="0 0 32 32"><path d="m8 2 3-1h10l3 1 4 5-1 3 1 3-4 12c-2 3-6 5-8 6-2-1-6-3-8-6L4 13l1-3-1-3z" fill="#fb4a1f"/><path d="m9 8 4-1h6l4 1 2 4-4 5 1 3-4 3-2 3-2-3-4-3 1-3-4-5z" fill="#fff"/><path d="m11 11 4 2v3zM21 11l-4 2v3zM13 20l3-2 3 2-3 2z" fill="#fb4a1f"/></svg></button>
    <button class="app run" aria-label="Security"><svg viewBox="0 0 32 32"><g fill="none" stroke-linecap="round"><path d="M9 29C-2 18 4 4 22 3" stroke="#0aa7b8" stroke-width="4"/><path d="M11 29C5 19 9 8 26 6" stroke="#13c8d4" stroke-width="3"/><path d="M13 29C10 20 14 11 29 10" stroke="#0794a8" stroke-width="2.500"/></g></svg></button>
    <button class="app active-app" aria-label="Excel"><svg viewBox="0 0 24 24"><use href="#excel"/></svg></button>
  </div>
  <div class="side tray">
    <button class="bare" aria-label="Hidden icons"><svg viewBox="0 0 14 10"><path d="m1 9 6-7 6 7" fill="none" stroke="#fff" stroke-width="1.700"/></svg></button>
    <button class="bare lang">ENG<br>IN</button>
    <svg class="i20" viewBox="0 0 20 20"><g fill="none" stroke="#fff" stroke-width="1.600"><path d="M1 8c5-6 13-6 18 0M3.800 11c4-4 8.500-4 12.400 0M6.500 14c2-2.300 5-2.300 7 0"/></g><circle cx="10" cy="16.500" r="1.800" fill="#fff"/></svg>
    <svg class="i20" viewBox="0 0 20 20"><path d="M1 7.500h3.500L9.500 3v14l-5-4.500H1zM13 7l6 6M19 7l-6 6" fill="none" stroke="#fff" stroke-width="1.400"/></svg>
    <svg class="i20" viewBox="0 0 20 20"><rect x="3" y="5" width="14" height="11" rx="2.500" fill="none" stroke="#fff" stroke-width="1.600"/><rect x="5.500" y="7.500" width="9" height="6" fill="#fff"/><path d="M18.500 8.500v4" stroke="#fff" stroke-width="2"/><path d="M5 0 1 6h3l-1 4 4.500-6H5z" fill="#fff" stroke="#222" stroke-width=".6"/></svg>
    <button class="bare clock">16:01<br>14-09-2025</button>
    <svg class="i20" viewBox="0 0 20 20"><path d="M2 15 4 12V7c0-7 12-7 12 0v5l2 3zM7.500 17h5c-1 3-4 3-5 0z" fill="#fff"/><path d="M7 6h4l-4 5h4M14 2h4l-4 4h4" fill="none" stroke="#222" stroke-width="1.400"/></svg>
  </div>
</footer>
<script src="sheet.js"></script>
</body>
</html>
```

FILE: styles.css
```css
* { box-sizing: border-box; }
html { height: 100%; }
body {
  margin: 0; height: 100vh; display: flex; flex-direction: column; overflow: hidden;
  background: #e6eaee; color: #252525;
  font: 14px/20px "Open Sans", "Noto Sans", sans-serif;
}
button, input, select { font: inherit; color: inherit; border: 0; background: none; padding: 0; margin: 0; }
svg { display: block; flex: none; }
i { font-style: normal; flex: none; }
.defs { position: absolute; width: 0; height: 0; }
.i20 { width: 20px; height: 20px; }
.i38 { width: 38px; height: 38px; overflow: visible; }
.chev { width: 10px; height: 10px; }
.chev.big { width: 14px; height: 14px; }
.bare { display: flex; align-items: center; justify-content: center; }
.dim { color: #a5a9ac; }

/* title bar */
.titlebar { display: flex; align-items: center; height: 60px; padding-left: 20px; flex: none; }
.title-left { flex: 1; display: flex; align-items: center; }
.autosave { display: flex; align-items: center; gap: 8px; margin-left: 21px; font-size: 12px; position: relative; }
.switch { position: absolute; opacity: 0; }
.track { width: 55px; height: 24px; border: 1px solid #555; border-radius: 12px; background: #fff; display: flex; align-items: center; gap: 7px; padding-left: 3px; color: #555; }
.track i { width: 18px; height: 18px; border-radius: 50%; background: #616161; }
.save { margin: 0 16px 0 18px; }
.drop { width: 24px; }
.title-left .drop + .bare { margin-left: 5px; }
.title-left .drop + .custom { margin: 0 31px 0 8px; }
.doc { gap: 6px; white-space: nowrap; }
.search { width: 459px; height: 40px; background: #fafafa; border: 1px solid #d0d3d6; border-bottom-color: #b9bcbf; border-radius: 4px; display: flex; align-items: center; gap: 14px; padding: 0 0 2px 15px; box-shadow: 0 1px 2px #0002; font-size: 16px; }
.search input { flex: 1; }
input::placeholder { color: #616161; opacity: 1; }
.title-right { flex: 1; display: flex; justify-content: flex-end; align-items: center; }
.avatar { width: 30px; height: 30px; border-radius: 50%; background: #4f6bed; color: #fff; font-size: 12px; line-height: 30px; text-align: center; margin-right: 15px; }
.win { width: 60px; height: 40px; display: flex; align-items: center; justify-content: center; }
.win svg { width: 13px; height: 13px; }

/* ribbon tabs */
.tabs { display: flex; align-items: center; gap: 26px; height: 38px; padding: 0 15px 0 26px; flex: none; font-size: 16px; }
.tabs > button { height: 28px; white-space: nowrap; }
.tabs .on { font-weight: 600; box-shadow: 0 3px #107c41; margin-left: 5px; }
.tabs .comments, .tabs .share { height: 30px; display: flex; align-items: center; justify-content: center; gap: 6px; border-radius: 4px; }
.tabs .comments { margin-left: auto; width: 118px; border: 1px solid #8a8a8a; background: #fff; }
.tabs .share { width: 90px; margin-left: -16px; background: #107c41; color: #fff; }
.comments svg, .share svg { width: 15px; height: 15px; }
.tabs .share .chev { width: 10px; height: 10px; }

/* ribbon */
.ribbon { display: flex; height: 124px; margin: 0 10px; background: #fff; border-radius: 10px; box-shadow: 0 2px 4px #0003; flex: none; }
.group { display: flex; flex-direction: column; position: relative; }
.group::after { content: ""; position: absolute; right: 0; top: 6px; bottom: 7px; width: 1px; background: #d1d1d1; }
.body { flex: 1; display: flex; padding-top: 4px; }
.foot { height: 24px; display: flex; justify-content: center; font-size: 12px; line-height: 24px; position: relative; }
.foot:has(.launcher) { padding-right: 22px; }
.launcher { position: absolute; right: 5px; top: 8px; }
.launcher svg { width: 10px; height: 10px; }
.clip { width: 217px; }
.font { width: 292px; }
.align { width: 373px; }
.number { width: 200px; }
.styles { width: 246px; }
.cells { width: 182px; }
.editing { width: 269px; }
.addins { width: 78px; }
.clip .body { padding-left: 16px; }
.font .body, .number .body, .cells .body { padding-left: 10px; }
.align .body { padding-left: 9px; }
.styles .body { padding-left: 8px; }
.editing .body { padding-left: 15px; }
.addins .body { padding-left: 4px; }
.rows { display: flex; flex-direction: column; padding-top: 9px; }
.body > .rows { padding-top: 5px; }
.row { height: 39px; display: flex; align-items: center; }
.row .combo + .combo { margin-left: 3px; }
.stack { display: flex; flex-direction: column; }
.cmd { height: 32px; display: flex; align-items: center; gap: 5px; white-space: nowrap; }
.clip .stack { margin-left: 8px; width: 140px; }
.cmd .far { margin-left: auto; }
.clip .cmd:nth-child(2) { width: 90px; }
.wrap { margin-left: 12px; }
.wrap .cmd:has(.far) { width: 162px; }
.editing .stack { width: 126px; }
.editing .cmd:first-child { width: 118px; }
.large { display: flex; flex-direction: column; align-items: center; white-space: nowrap; justify-content: flex-start; padding-top: 5px; height: 88px; }
.large .i38 { margin-bottom: 4px; }
.large > .chev { margin-top: 4px; }
.large span { display: flex; align-items: center; gap: 4px; }
.paste { width: 50px; }
.w16 { width: 16px; } .w18 { width: 18px; } .w20 { width: 20px; } .w26 { width: 26px; } .w30 { width: 30px; } .w32 { width: 32px; } .w36 { width: 36px; }
.w54 { width: 54px; } .w58 { width: 58px; } .w60 { width: 60px; } .w72 { width: 72px; } .w98 { width: 98px; }
.w63 { width: 63px; } .w142 { width: 142px; } .w180 { width: 180px; }
.combo { position: relative; height: 30px; border: 1px solid #8a8a8a; border-radius: 4px; background: #fff; display: flex; }
.combo select { appearance: none; flex: 1; padding-left: 3px; outline: 0; }
.combo .chev { position: absolute; right: 3px; top: 9px; }
.ic { height: 30px; display: flex; align-items: center; justify-content: center; }
.pressed { background: #ebebeb; border: 1px solid #8a8a8a; border-radius: 4px; }
.sep { width: 1px; height: 30px; background: #d1d1d1; margin: 0 4px; }
.sep.tight { margin: 0 1px; }
.sep.tall { height: 78px; margin: 9px 0 0 6px; }
.ga { font-size: 20px; } .gs { font-size: 17px; }
.caret { width: 7px; height: 7px; margin-bottom: 12px; }
.bold { font-weight: 700; font-size: 16px; }
.ital { font: italic 18px "Liberation Serif", serif; }
.under { font-size: 16px; text-decoration: underline; text-underline-offset: 3px; }
.dec { display: grid; grid-template-columns: 11px 8px; font: 11px/12px "Liberation Sans", sans-serif; align-content: center; justify-content: center; text-align: right; }
.dec svg { width: 11px; height: 8px; align-self: center; }
.dec .full { grid-column: 1 / 3; }
.collapse { margin: 98px 11px 0 auto; height: 18px; }

/* formula bar */
.formula { display: flex; align-items: center; height: 48px; padding: 1px 10px 0; flex: none; }
.namebox, .fxbox, .fxinput { height: 30px; background: #fff; border: 1px solid #d0d3d6; border-radius: 4px; display: flex; align-items: center; }
.namebox { width: 210px; padding: 0 5px; }
.namebox input, .fxinput input { flex: 1; min-width: 0; outline: 0; }
.dots { width: 3px; height: 15px; margin: 0 11px 0 12px; background: repeating-linear-gradient(#444 0 3px, transparent 3px 6px); }
.fxbox { width: 91px; justify-content: space-between; padding: 0 5px; }
.fxbox svg { width: 18px; height: 16px; }
.fx { font: italic 22px/26px "Liberation Serif", serif; }
.fxinput { flex: 1; margin-left: 6px; padding: 0 4px; }

/* worksheet */
.sheet { flex: 1; min-height: 0; display: flex; }
.canvas { position: relative; flex: 1; overflow: hidden; background: #fff; border-right: 1px solid #d8d8d8; }
.grid { border-collapse: separate; border-spacing: 0; table-layout: fixed; width: 1919px; font: 12px/15px Lato, "Open Sans", sans-serif; color: #000; }
.grid th, .grid td { height: 18px; padding: 0 2px; border: solid #e0e0e0; border-width: 0 1px 1px 0; white-space: nowrap; overflow: hidden; vertical-align: bottom; text-align: left; font-weight: 400; }
.grid thead th { height: 19px; background: #efefef; border-bottom-color: #ababab; color: #444; text-align: center; font: 12px/17px "Open Sans", sans-serif; padding: 0 0 1px; }
.grid tbody th { background: #efefef; border-right-color: #ababab; color: #444; text-align: center; font: 12px/17px "Open Sans", sans-serif; padding: 0 0 0 1px; }
.grid thead th.sel { background: #d9d9d9; border-bottom: 2px solid #217346; line-height: 16px; }
.grid tbody th.sel { background: #dcdcdc; color: #217346; border-right: 2px solid #217346; }
.corner::after { content: ""; display: block; margin: 4px 3px 0 auto; width: 0; border: solid transparent; border-width: 0 0 11px 11px; border-bottom-color: #d0d0d0; }
.grid .num { text-align: right; }
.grid .year { text-align: right; font-weight: 700; }
.grid .yend { border-bottom-color: #95b3d7; }
.grid .plain { border-color: #fff; }
.grid .edge { border-right-color: #e0e0e0; }
.grid .head { background: #dce6f1; border-color: #dce6f1; border-bottom-color: #95b3d7; font-weight: 700; }
.grid .total { background: #dce6f1; border-color: #dce6f1; font-weight: 700; }
.grid .wide { font-size: 13px; }
.grid .ruled { border-bottom-color: #95b3d7; }
.grid .indent { padding-left: 5px; }
.grid .orange { background: #e26b0a; border-color: #e26b0a; }
.grid .tall th, .grid .tall td { height: 36px; padding-bottom: 4px; }
.grid .banner { background: #8db4e2; border-color: #8db4e2; text-align: center; font: 700 40px/54px "DejaVu Serif", serif; font-stretch: condensed; text-shadow: 1px 1px #8db4e2, 2px 2px #111; }
.grid .tall .caption { font-size: 25px; line-height: 33px; padding: 0 5px; }
.grid .click { border-color: #fff #e0e0e0 #e0e0e0 #fff; text-align: center; color: red; font: 700 32px/42px Lato, sans-serif; }
.grid .active { position: relative; overflow: visible; }
.active::before { content: ""; position: absolute; inset: -3px -2px -2px -2px; border: 2px solid #217346; }
.active::after { content: ""; position: absolute; right: -4px; bottom: -4px; width: 6px; height: 6px; background: #217346; border: solid #fff; border-width: 1px 0 0 1px; }
.headcell { display: flex; justify-content: space-between; align-items: flex-end; height: 17px; }
.pick { width: 18px; height: 18px; margin: 0 -2px -1px 0; background: #f7f7f7; border: 1px solid #a6a6a6; display: flex; align-items: center; justify-content: center; }
.pick svg { width: 14px; height: 14px; }
.fold { display: inline-block; width: 9px; height: 9px; margin-right: 2px; border: 1px solid #8ea0bd; border-radius: 1px; background: linear-gradient(#33507f, #33507f) center / 5px 1px no-repeat, #e6ecf5; vertical-align: 0; }

/* floating objects */
.bar-chart { position: absolute; left: 510px; top: 272px; width: 462px; height: 278px; }
.combo-chart { position: absolute; left: 1028px; top: 374px; width: 435px; height: 286px; }
.arrow { position: absolute; left: 1617px; top: 358px; width: 197px; height: 104px; }
.bar-chart text, .combo-chart text { font-family: Lato, sans-serif; }
.c-title { font-size: 19px; font-weight: 700; fill: #404040; text-anchor: middle; }
.c-val { font-size: 10px; font-weight: 700; fill: #fff; text-anchor: end; }
.c-cat { font-size: 9px; fill: #404040; text-anchor: end; }
.c-cat.mid, .c-cat .mid { text-anchor: middle; }
.c-cat.left { text-anchor: start; font-size: 10px; }
.c-ax { font-size: 10px; fill: #595959; }
.c-ax.end { text-anchor: end; }
.combo-chart .c-btn text { font: 9px "Liberation Sans", sans-serif; fill: #000; }

.vscroll { width: 21px; margin: 0 2px; background: #f4f4f4; border-radius: 10px; display: flex; flex-direction: column; align-items: center; padding: 6px 0 3px; gap: 7px; }
.vscroll svg { width: 11px; height: 8px; fill: #707070; }
.vscroll i { width: 11px; height: 434px; border-radius: 6px; background: #707070; margin-bottom: auto; }

/* sheet tabs */
.sheets { height: 40px; display: flex; align-items: center; flex: none; background: #e7eaea; border-top: 1px solid #dadcdc; font-size: 17px; padding-right: 23px; }
.nav { width: 137px; display: flex; gap: 32px; padding-left: 32px; }
.nav svg { width: 8px; height: 12px; }
.tab { height: 24px; padding: 0 15px; border-right: 1px solid #c8caca; white-space: nowrap; color: #333; }
.tab.on { height: 36px; align-self: flex-start; margin: -1px 4px 0; padding: 0 10px; background: #fff; border: 0; border-radius: 0 0 6px 6px; font-size: 16px; font-weight: 600; box-shadow: 0 1px 2px #0003; }
.tab.on span { display: block; box-shadow: 0 2px #107c41; line-height: 24px; }
.tab.last { border: 0; padding-right: 12px; }
.more { gap: 2px; margin-right: 25px; }
.more i { width: 4px; height: 4px; border-radius: 50%; background: #444; }
.add svg { width: 14px; height: 14px; }
.sheets .dots { margin: 0 18px 0 32px; }
.hscroll { flex: 1; height: 21px; border-radius: 10px; background: #f4f4f4; display: flex; align-items: center; padding: 0 6px; gap: 6px; }
.hscroll svg { width: 9px; height: 11px; fill: #707070; }
.hscroll i { flex: 1; height: 11px; border-radius: 6px; background: #707070; margin-right: 40px; }

/* status bar */
.status { height: 27px; display: flex; align-items: center; flex: none; background: #f4f4f4; border-top: 1px solid #fff; font-size: 12px; color: #444; padding-left: 15px; }
.ready { width: 60px; }
.macro { margin-right: 20px; }
.access { gap: 3px; font-weight: 700; color: #333; }
.views { display: flex; margin-left: auto; align-self: stretch; }
.views button { width: 50px; display: flex; align-items: center; justify-content: center; }
.views .on { background: #e0e0e0; }
.views svg { width: 18px; height: 18px; }
.zoom { display: flex; align-items: center; gap: 6px; margin-left: 6px; }
.zoom svg { width: 10px; height: 10px; }
.zoom input { appearance: none; width: 126px; height: 15px; background: linear-gradient(#666, #666) center / 100% 1px no-repeat, linear-gradient(#666, #666) center / 1px 8px no-repeat; }
.zoom input::-webkit-slider-thumb { appearance: none; width: 6px; height: 14px; background: #666; }
.pct { width: 52px; padding-left: 17px; }

/* taskbar */
.taskbar { height: 60px; display: flex; align-items: center; flex: none; color: #fff; background: linear-gradient(90deg, #262524, #20271d 12%, #20292d 24%, #2b2425 34%, #202a20 50%, #1d262a 60%, #2a2325 64%, #20281f 71%, #1f2528 80%, #232628); }
.side { flex: 1; display: flex; align-items: center; }
.weather { display: flex; gap: 10px; padding-left: 25px; text-align: left; line-height: 20px; }
.cloud { position: relative; width: 30px; padding-top: 14px; }
.cloud svg { width: 30px; height: 20px; }
.cloud b { position: absolute; left: 14px; top: -1px; width: 20px; height: 20px; border-radius: 50%; background: #ff99a4; color: #222; font: 12px/20px "Open Sans", sans-serif; text-align: center; }
.wt em { display: block; font-style: normal; color: #cfcfcf; }
.apps { display: flex; align-items: center; padding-left: 24px; }
.app { width: 55px; height: 50px; display: flex; align-items: center; justify-content: center; position: relative; }
.app svg { width: 30px; height: 30px; overflow: visible; }
.active-app { width: 50px; margin-left: 3px; background: #ffffff14; border: 1px solid #ffffff12; border-radius: 6px; }
.app.run::after, .active-app::after { content: ""; position: absolute; bottom: 0; left: 50%; margin-left: -4px; width: 8px; height: 4px; border-radius: 2px; background: #9a9a9a; }
.active-app::after { width: 20px; margin-left: -10px; background: #d9a0e0; }
.tsearch { width: 275px; height: 40px; margin: 0 3px; border-radius: 20px; background: #44464a; border: 1px solid #5c5e61; display: flex; align-items: center; padding: 0 8px 0 14px; gap: 11px; font-size: 16px; }
.tsearch input { flex: 1; min-width: 0; }
.tsearch input::placeholder { color: #d6d6d6; }
.promo { width: 56px; height: 32px; }
.tray { justify-content: flex-end; gap: 10px; padding-right: 25px; }
.tray .bare svg { width: 14px; height: 10px; }
.lang { width: 54px; margin: 0 0 0 6px; text-align: center; }
.clock { text-align: right; margin-left: 14px; }
```

FILE: sheet.js
```js
const columns = [
  ["A", 96], ["B", 96], ["C", 89], ["D", 134], ["E", 21], ["F", 59], ["G", 58], ["H", 197],
  ["I", 123], ["J", 59], ["K", 46], ["L", 24], ["N", 3], ["O", 225], ["P", 107], ["Q", 84],
  ["R", 59], ["S", 59], ["T", 59], ["U", 59], ["V", 59], ["W", 59], ["X", 59], ["Y", 59]
];
const ROWS = 36;
const cells = {};
const skip = new Set();
const put = (ref, html, cls = "", span = "") => { cells[ref] = { html, cls, span }; };

function merge(ref, html, cls, from, to, top, bottom) {
  const names = columns.map(c => c[0]);
  const a = names.indexOf(from), b = names.indexOf(to);
  for (let r = top; r <= bottom; r++)
    for (let c = a; c <= b; c++) skip.add(names[c] + r);
  skip.delete(ref);
  put(ref, html, cls, ` colspan="${b - a + 1}" rowspan="${bottom - top + 1}"`);
}

const arrow = '<button class="pick" aria-label="Filter"><svg viewBox="0 0 16 16"><path d="M3 5h10l-5 6z" fill="#666"/></svg></button>';
const funnel = '<button class="pick" aria-label="Filter applied"><svg viewBox="0 0 16 16"><use href="#funnel"/></svg></button>';
const head = (text, button) => `<div class="headcell">${text}${button}</div>`;

const rates = [
  [2001, 693, "4.595366667", 4287, "11.76234483"], [2002, 307, "4.16852381", 394, "7.171894737"],
  [2003, 2582, "5.793380952", 2402, "2.311387097"], [2004, 1183, "5.724807692", 3274, "3.68975"],
  [2005, 909, "4.369172414", 1370, "5.685571429"], [2006, 231, "3.692833333", 1262, "8.080115385"],
  [2007, 590, "4.107628571", 3847, "8.808527778"], [2008, 399, "5.9005", 783, "4.868086957"],
  [2009, 645, "4.236192308", 651, "12.53212"], [2010, 1961, "3.616384615", 435, "1.997290323"],
  [2011, 272, "1.840322581", 4047, "2.261363636"], [2012, 601, "4.396482759", 1048, "4.806068966"],
  [2013, 634, "2.907558824", 376, "3.588756757"], [2014, 725, "4.461933333", 591, "3.856325"]
];
put("A8", head("Year", arrow), "head");
put("B8", head("Sex", arrow), "head");
put("C8", "Total Cases", "head");
put("D8", "Average of Rate", "head");
rates.forEach(([year, f, fr, m, mr], i) => {
  const r = 9 + i * 2;
  put("A" + r, `<button class="fold" aria-label="Collapse"></button>${year}`, "year");
  put("A" + (r + 1), "", "yend");
  put("B" + r, "Female"); put("B" + (r + 1), "Male");
  put("C" + r, f, "num"); put("C" + (r + 1), m, "num");
  put("D" + r, fr, "num"); put("D" + (r + 1), mr, "num");
});

const diseases = [
  ["Campylobacteriosis", 39563], ["Coccidioidomycosis", 25427], ["Giardiasis", 13086],
  ["Salmonellosis", 13269], ["Shiga toxin-producing E. coli (STEC)", 9429]
];
put("H8", head("Top 5 disease", funnel), "head");
put("I8", "total Cases", "head indent");
diseases.forEach(([name, n], i) => {
  const rule = i === diseases.length - 1 ? " ruled" : "";
  put("H" + (9 + i), name, "plain" + rule);
  put("I" + (9 + i), n, "plain edge num" + rule);
});
put("H14", "Grand Total", "total wide");
put("I14", 100774, "total num");

const counties = [
  ["California", 9, 1648], ["Fresno", 3, 688], ["Kings", 1, 235], ["Orange", 7, 199], ["San Diego", 7, 1242],
  ["San Joaquin", 6, 457], ["San Luis Obispo", 3, 87], ["San Mateo", 6, 90], ["Santa Cruz", 5, 94], ["Stanislaus", 4, 142]
];
put("O8", head("Country name", funnel), "head wide");
put("P8", "Count of Disease", "head wide");
put("Q8", "Sum of Cases", "head wide");
counties.forEach(([name, n, sum], i) => {
  const rule = i === counties.length - 1 ? " ruled" : "";
  put("O" + (9 + i), name, "plain" + rule);
  put("P" + (9 + i), n, "plain num" + rule);
  put("Q" + (9 + i), sum, "plain edge num" + rule);
});
put("O19", "Grand Total", "total wide");
put("P19", 51, "total num");
put("Q19", 4882, "total num");

for (let r = 8; r <= ROWS; r++) put("E" + r, "", "orange");
for (let r = 8; r <= 33; r++) put("L" + r, "", "orange");
for (const c of "FGHIJK") put(c + 33, "", "orange");
put("J11", "", "active");

merge("D2", "STATISTICAL SUMMARIES AND ANALYSIS", "banner", "D", "O", 2, 5);
merge("H31", "Top 5 Disease with Total no of cases", "caption", "H", "K", 31, 31);
merge("U26", "Click Here", "click", "U", "W", 26, 28);

let html = '<colgroup><col style="width:26px">' + columns.map(c => `<col style="width:${c[1]}px">`).join("") + "</colgroup>";
const label = name => name === "N" ? "I" : name;
html += '<thead><tr><th class="corner"></th>' + columns.map(c => `<th${c[0] === "J" ? ' class="sel"' : ""}>${label(c[0])}</th>`).join("") + "</tr></thead><tbody>";
for (let r = 1; r <= ROWS; r++) {
  html += `<tr${r === 31 ? ' class="tall"' : ""}><th${r === 11 ? ' class="sel"' : ""}>${r}</th>`;
  for (const [name] of columns) {
    const ref = name + r;
    if (skip.has(ref)) continue;
    const c = cells[ref] || { html: "", cls: "", span: "" };
    html += `<td class="${c.cls}"${c.span}>${c.html}</td>`;
  }
  html += "</tr>";
}
document.getElementById("grid").innerHTML = html + "</tbody>";
```
